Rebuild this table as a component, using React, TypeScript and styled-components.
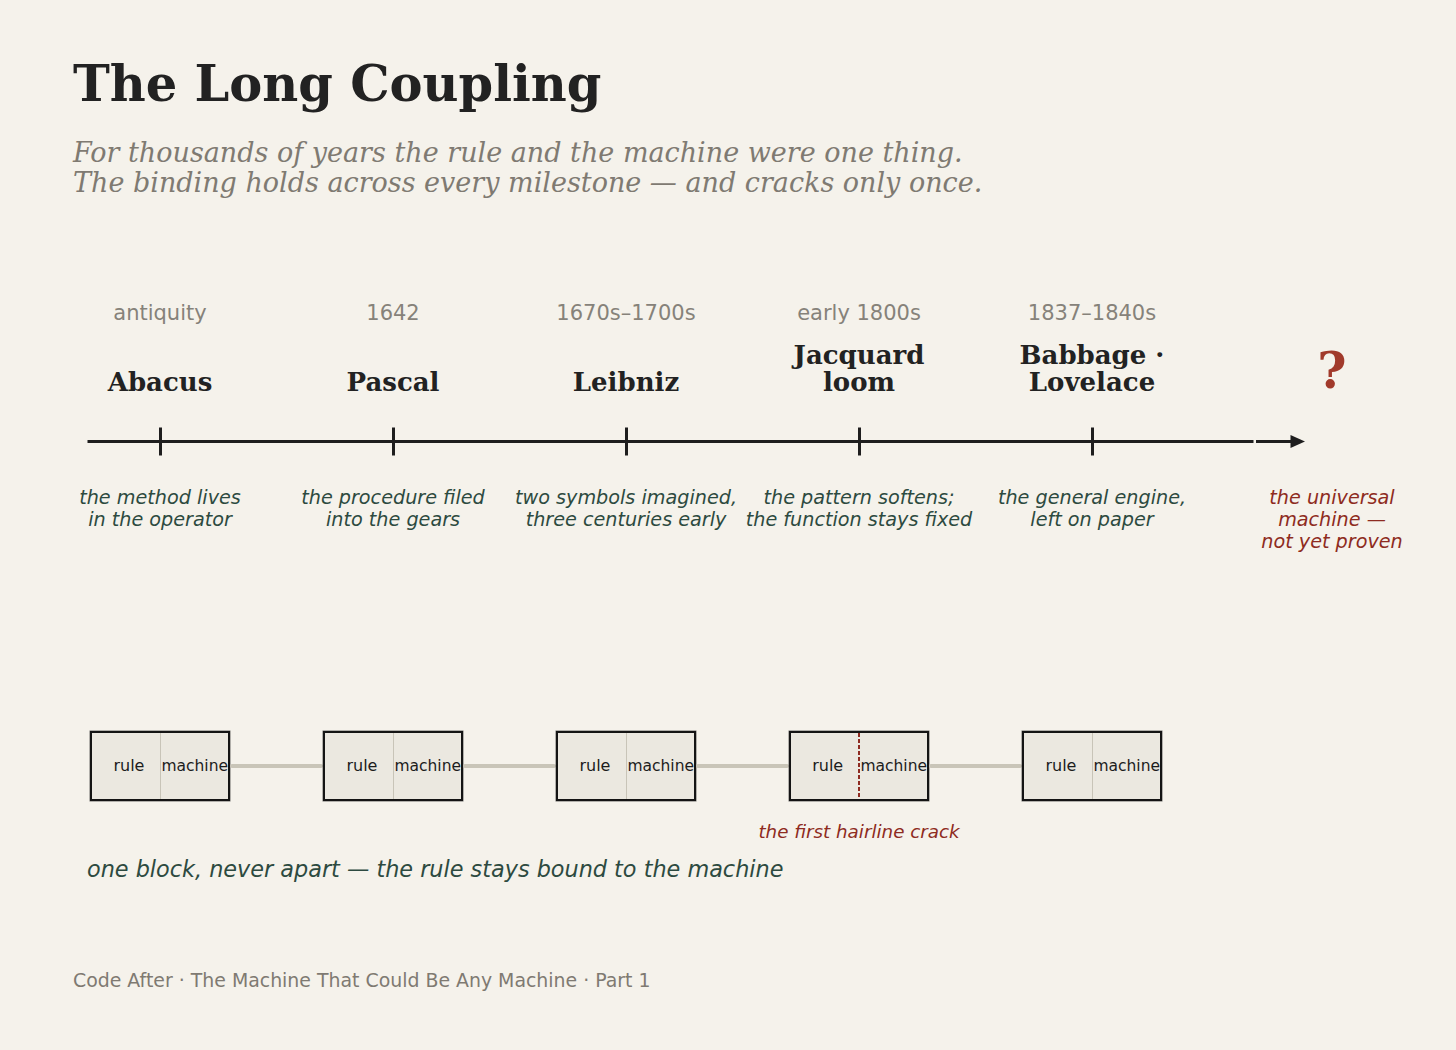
import React from "react";
import styled, { createGlobalStyle } from "styled-components";

const GlobalStyle = createGlobalStyle`
  html, body {
    margin: 0;
    padding: 0;
    background: #f5f2eb;
  }
  body {
    font-family: "DejaVu Sans", "Liberation Sans", sans-serif;
  }
`;

const Page = styled.main`
  width: 1456px;
  min-height: 1050px;
  box-sizing: border-box;
  padding-top: 53px;
  background: #f5f2eb;
  display: flex;
  flex-direction: column;
`;

const Header = styled.header`
  padding-left: 73px;
`;

const Title = styled.h1`
  margin: 0;
  font-family: "DejaVu Serif", "Liberation Serif", serif;
  font-weight: 700;
  font-size: 49.5px;
  line-height: 62px;
  color: #222222;
`;

const Subtitle = styled.p`
  margin: 22.6px 0 0;
  font-family: "DejaVu Serif", "Liberation Serif", serif;
  font-style: italic;
  font-size: 27px;
  line-height: 30px;
  color: #7f7a72;
`;

const Timeline = styled.section`
  margin-top: 103.4px;
  padding-left: 43.5px;
  display: grid;
  grid-template-columns: repeat(5, 233px) 247px;
  grid-template-rows: 24px 71.5px 60px auto;
`;

const Year = styled.div<{ $col: number }>`
  grid-row: 1;
  grid-column: ${(p) => p.$col};
  text-align: center;
  font-size: 21px;
  line-height: 24px;
  color: #86827a;
`;

const Name = styled.div<{ $col: number; $open?: boolean }>`
  grid-row: 2;
  grid-column: ${(p) => p.$col};
  align-self: end;
  text-align: center;
  white-space: pre-line;
  font-family: "DejaVu Serif", "Liberation Serif", serif;
  font-weight: 700;
  font-size: ${(p) => (p.$open ? "50px" : "26px")};
  line-height: ${(p) => (p.$open ? "50px" : "27px")};
  color: ${(p) => (p.$open ? "#a13a2b" : "#222222")};
`;

const Axis = styled.svg`
  grid-row: 3;
  grid-column: 1 / -1;
  display: block;
`;

const Note = styled.div<{ $col: number; $open?: boolean }>`
  grid-row: 4;
  grid-column: ${(p) => p.$col};
  padding-top: 30.5px;
  text-align: center;
  white-space: pre-line;
  font-style: italic;
  font-size: 19.2px;
  line-height: 22px;
  color: ${(p) => (p.$open ? "#8e2b21" : "#2d4a40")};
`;

const Chain = styled.section`
  margin-top: 178px;
  padding-left: 90px;
  display: flex;
  align-items: flex-start;
`;

const Stage = styled.div`
  width: 140px;
  display: flex;
  flex-direction: column;
  align-items: center;
`;

const Block = styled.div`
  width: 140px;
  height: 70px;
  box-sizing: border-box;
  border: 2.5px solid #141414;
  box-shadow: 0 0 0 0.5px rgba(20, 20, 20, 0.6);
  background: #ebe8e0;
  display: flex;
  align-items: stretch;
  color: #1c1c1c;
`;

const Half = styled.span<{ $part: "rule" | "machine" }>`
  flex: 1;
  display: flex;
  align-items: center;
  justify-content: center;
  box-sizing: border-box;
  padding-left: ${(p) => (p.$part === "rule" ? "6px" : "0")};
  font-size: ${(p) => (p.$part === "rule" ? "16px" : "15.5px")};
  white-space: nowrap;
`;

const Seam = styled.span<{ $cracked?: boolean }>`
  width: ${(p) => (p.$cracked ? "2px" : "1.5px")};
  flex: none;
  background: ${(p) =>
    p.$cracked
      ? "repeating-linear-gradient(to bottom, #8e2b21 0 4px, transparent 4px 6px)"
      : "#c8c4b8"};
`;

const Link = styled.div`
  width: 93px;
  height: 4px;
  margin-top: 33px;
  border-radius: 2px;
  background: #c9c5b8;
`;

const CrackNote = styled.div`
  margin-top: 19.8px;
  white-space: nowrap;
  font-style: italic;
  font-size: 18.3px;
  line-height: 22px;
  color: #8e2b21;
`;

const Caption = styled.p`
  margin: 13.5px 0 0;
  padding-left: 87px;
  font-style: italic;
  font-size: 22.35px;
  line-height: 26px;
  color: #2d4a40;
`;

const Footer = styled.footer`
  margin-top: 88px;
  padding-left: 73px;
  font-size: 18.9px;
  line-height: 20px;
  color: #7f7a72;
`;

interface Milestone {
  year: string;
  name: string;
  note: string;
  cracked?: boolean;
}

const milestones: Milestone[] = [
  { year: "antiquity", name: "Abacus", note: "the method lives\nin the operator" },
  { year: "1642", name: "Pascal", note: "the procedure filed\ninto the gears" },
  { year: "1670s–1700s", name: "Leibniz", note: "two symbols imagined,\nthree centuries early" },
  {
    year: "early 1800s",
    name: "Jacquard\nloom",
    note: "the pattern softens;\nthe function stays fixed",
    cracked: true,
  },
  { year: "1837–1840s", name: "Babbage ·\nLovelace", note: "the general engine,\nleft on paper" },
];

const COL = 233;
const AXIS_W = 5 * COL + 247;
const AXIS_Y = 45.5;

const TimelineAxis = () => (
  <Axis width={AXIS_W} height={60} viewBox={`0 0 ${AXIS_W} 60`}>
    <line x1={43.5} y1={AXIS_Y} x2={1209.5} y2={AXIS_Y} stroke="#1e1e1e" strokeWidth={3} />
    {milestones.map((_, i) => (
      <line
        key={i}
        x1={COL / 2 + i * COL}
        y1={AXIS_Y - 14}
        x2={COL / 2 + i * COL}
        y2={AXIS_Y + 14}
        stroke="#1e1e1e"
        strokeWidth={3}
      />
    ))}
    <line x1={1212} y1={AXIS_Y} x2={1250} y2={AXIS_Y} stroke="#1e1e1e" strokeWidth={3} />
    <polygon
      points={`1246.5,${AXIS_Y - 6.5} 1261,${AXIS_Y} 1246.5,${AXIS_Y + 6.5}`}
      fill="#1e1e1e"
    />
  </Axis>
);

export default function App() {
  return (
    <>
      <GlobalStyle />
      <Page>
        <Header>
          <Title>The Long Coupling</Title>
          <Subtitle>
            For thousands of years the rule and the machine were one thing.
            <br />
            The binding holds across every milestone — and cracks only once.
          </Subtitle>
        </Header>

        <Timeline>
          {milestones.map((m, i) => (
            <React.Fragment key={m.year}>
              <Year $col={i + 1}>{m.year}</Year>
              <Name $col={i + 1}>{m.name}</Name>
              <Note $col={i + 1}>{m.note}</Note>
            </React.Fragment>
          ))}
          <Name $col={6} $open>
            ?
          </Name>
          <TimelineAxis />
          <Note $col={6} $open>
            {"the universal\nmachine —\nnot yet proven"}
          </Note>
        </Timeline>

        <Chain>
          {milestones.map((m, i) => (
            <React.Fragment key={m.year}>
              {i > 0 && <Link />}
              <Stage>
                <Block>
                  <Half $part="rule">rule</Half>
                  <Seam $cracked={m.cracked} />
                  <Half $part="machine">machine</Half>
                </Block>
                {m.cracked && <CrackNote>the first hairline crack</CrackNote>}
              </Stage>
            </React.Fragment>
          ))}
        </Chain>

        <Caption>one block, never apart — the rule stays bound to the machine</Caption>

        <Footer>Code After · The Machine That Could Be Any Machine · Part 1</Footer>
      </Page>
    </>
  );
}
